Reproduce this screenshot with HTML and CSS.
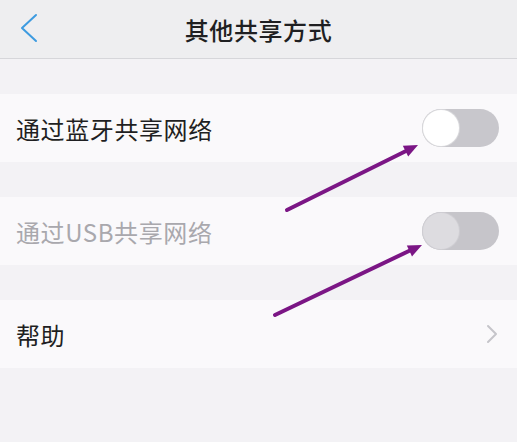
FILE: index.html
```html
<!DOCTYPE html>
<html lang="zh-CN">
<head>
  <meta charset="UTF-8" />
  <meta name="viewport" content="width=device-width, initial-scale=1.0" />
  <title>其他共享方式</title>
  <link rel="stylesheet" href="styles.css">
</head>
<body>
  <header class="top-bar">
    <button class="back" aria-label="返回">
      <svg width="20" height="30" viewBox="0 0 20 30">
        <polyline points="16,2 2,15 16,28" fill="none" stroke="#3d9be0" stroke-width="2" stroke-linecap="round" stroke-linejoin="round" />
      </svg>
    </button>
    <h1>其他共享方式</h1>
  </header>

  <section class="group">
    <div class="row">
      <span class="label">通过蓝牙共享网络</span>
      <span class="switch"><span class="knob"></span></span>
    </div>
  </section>

  <section class="group">
    <div class="row disabled">
      <span class="label">通过USB共享网络</span>
      <span class="switch"><span class="knob"></span></span>
    </div>
  </section>

  <section class="group">
    <div class="row">
      <span class="label">帮助</span>
      <svg class="chevron" width="12" height="20" viewBox="0 0 12 20">
        <polyline points="2,2 10,10 2,18" fill="none" stroke="#c5c5ca" stroke-width="2" stroke-linecap="round" stroke-linejoin="round" />
      </svg>
    </div>
  </section>

  <!-- annotation arrows drawn over the screenshot -->
  <svg class="arrows" width="517" height="442" viewBox="0 0 517 442">
    <line x1="287" y1="210" x2="408" y2="150" stroke="#7b1685" stroke-width="4" stroke-linecap="round" />
    <polygon points="418,145 408.2,156.6 402.8,145.8" fill="#7b1685" />
    <line x1="275" y1="315" x2="411" y2="250" stroke="#7b1685" stroke-width="4" stroke-linecap="round" />
    <polygon points="422,245 412,256.4 406.8,245.6" fill="#7b1685" />
  </svg>
</body>
</html>
```

FILE: styles.css
```css
body {
  margin: 0;
  background-color: #f3f2f5;
  font-family: "Noto Sans CJK SC", "Noto Sans", sans-serif;
  color: #1f1f22;
  position: relative;
  min-height: 442px;
}

.top-bar {
  height: 58px;
  background-color: #eeeef0;
  border-bottom: 1px solid #d6d6da;
  display: flex;
  align-items: center;
  justify-content: center;
  position: relative;
}

.top-bar h1 {
  margin: 0;
  font-size: 24px;
  font-weight: 500;
  color: #1f1f22;
  letter-spacing: 0.6px;
}

.back {
  position: absolute;
  left: 20px;
  top: 11px;
  background: none;
  border: none;
  padding: 0;
  width: 24px;
  height: 34px;
  display: flex;
  align-items: center;
}

.group {
  margin-top: 35px;
  background-color: #faf9fb;
}

.group + .group {
  margin-top: 35px;
}

.row {
  height: 68px;
  display: flex;
  align-items: center;
  justify-content: space-between;
  padding: 0 18px 0 16px;
}

.label {
  font-size: 24px;
  letter-spacing: 0.6px;
}

.switch {
  width: 77px;
  height: 38px;
  border-radius: 19px;
  background-color: #c8c7cc;
  display: flex;
  align-items: center;
}

.knob {
  width: 36px;
  height: 36px;
  margin-left: 1px;
  border-radius: 50%;
  background-color: #ffffff;
  box-shadow: 0 0 0 1px #d9d9dc;
}

.row.disabled .label {
  color: #a9a8ad;
}

.row.disabled .switch {
  background-color: #c6c5ca;
}

.row.disabled .knob {
  background-color: #dddce0;
  box-shadow: 0 0 0 1px #cfced3;
}

.chevron {
  margin-right: 1px;
}

.arrows {
  position: absolute;
  left: 0;
  top: 0;
  pointer-events: none;
}
```
